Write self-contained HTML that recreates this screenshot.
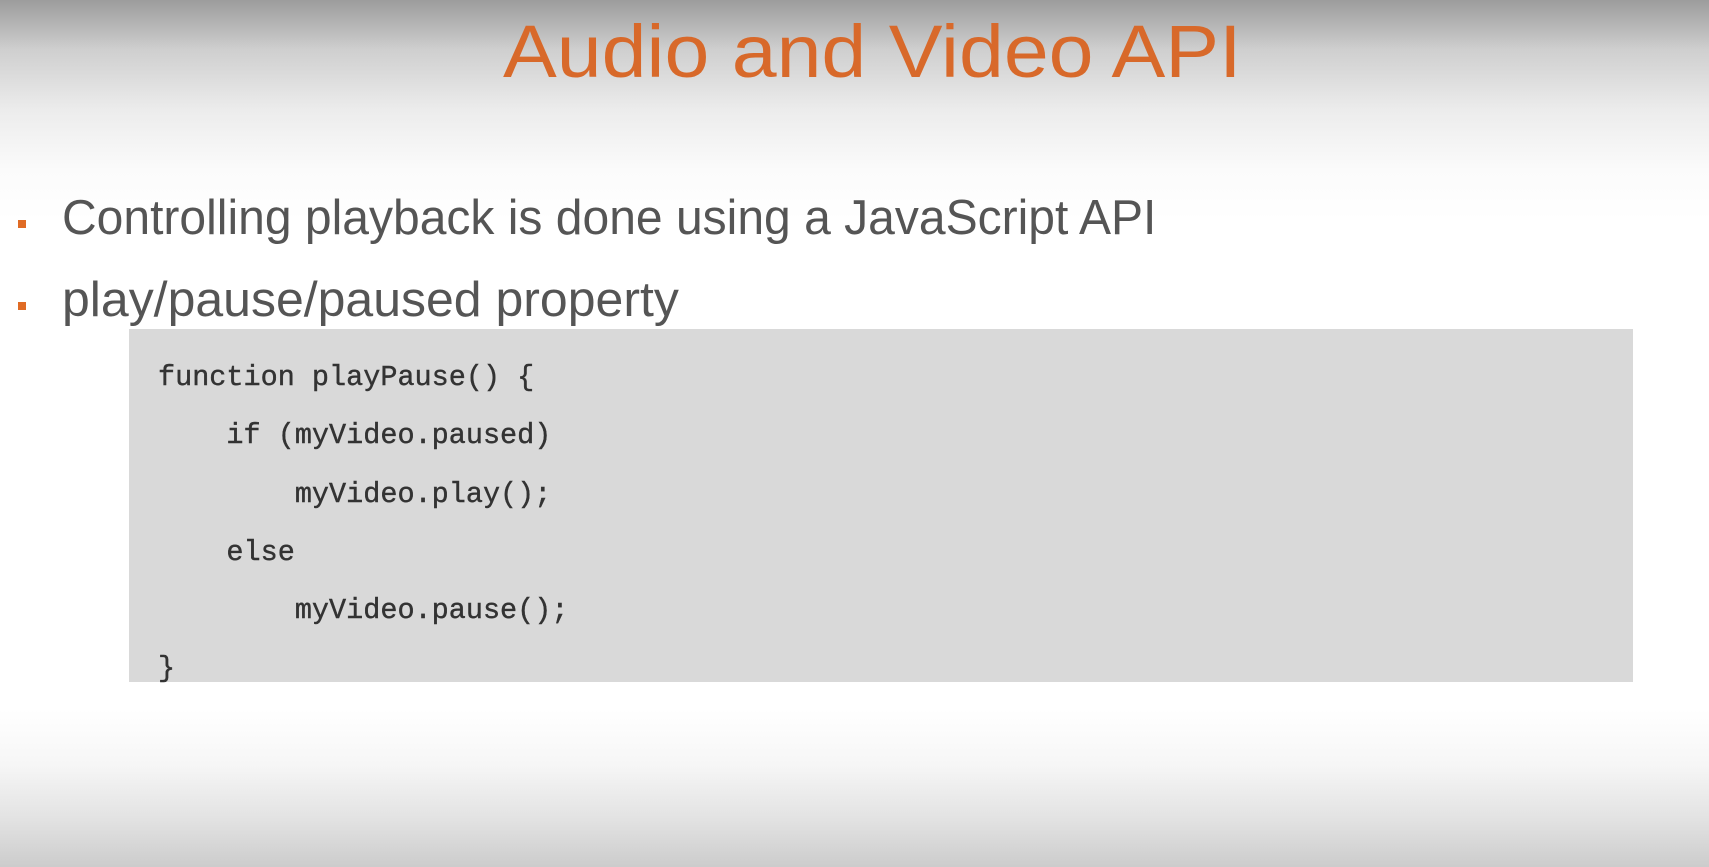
<!DOCTYPE html>
<html><head><meta charset="utf-8"><style>
html,body{margin:0;padding:0}
body{width:1709px;height:867px;position:relative;overflow:hidden;
background:linear-gradient(to bottom,#9c9c9c 0px,#cfcfcf 50px,#ececec 110px,#fbfbfb 170px,#ffffff 220px,#ffffff 710px,#f6f6f6 765px,#e2e2e2 820px,#cccccc 867px);
font-family:"Liberation Sans",sans-serif}
.title{position:absolute;left:503px;top:7px;width:742px;font-size:74px;color:#d8692a;white-space:nowrap;line-height:90px}
.title span{display:inline-block;transform-origin:left;transform:scaleX(1.09)}
.b{position:absolute;left:62px;font-size:49px;color:#555;white-space:nowrap;line-height:56px}
.b span{display:inline-block;transform-origin:left}
.sq{position:absolute;left:18px;width:8px;height:8px;background:#e06b24}
.code{position:absolute;left:129px;top:329px;width:1504px;height:353px;background:#d9d9d9}
.code pre{margin:0;position:absolute;left:29px;top:20px;font-family:"Liberation Mono",monospace;font-size:28.5px;line-height:58.3px;color:#333;-webkit-text-stroke:0.4px #333}
</style></head><body>
<div class="title"><span>Audio and Video API</span></div>
<div class="sq" style="top:220px"></div>
<div class="b" style="top:190px"><span style="transform:scaleX(0.98)">Controlling playback is done using a JavaScript API</span></div>
<div class="sq" style="top:302px"></div>
<div class="b" style="top:272px"><span style="transform:scaleX(1.02)">play/pause/paused property</span></div>
<div class="code"><pre>function playPause() {
    if (myVideo.paused)
        myVideo.play();
    else
        myVideo.pause();
}</pre></div>
</body></html>
